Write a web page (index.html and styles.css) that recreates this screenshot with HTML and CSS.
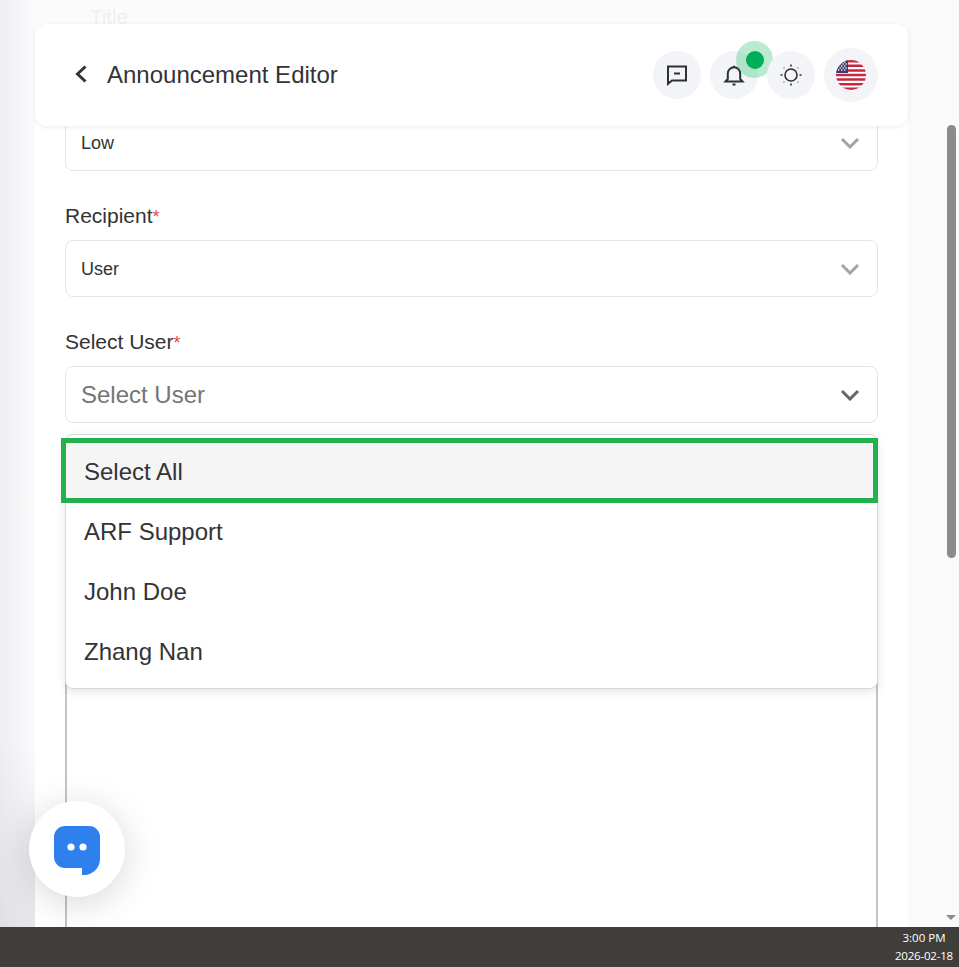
FILE: index.html
```html
<!DOCTYPE html>
<html lang="en">
<head>
<meta charset="utf-8">
<title>Announcement Editor</title>
<link rel="stylesheet" href="styles.css">
</head>
<body>
<div class="screen">
  <div class="viewport">
    <div class="gutter-left"></div>
    <main class="content">
      <form class="form">
        <div class="title-line">Title</div>
        <div class="select select-low">
          <span class="value">Low</span>
          <svg class="chevron muted" viewBox="0 0 20 12"><path d="M2 2l8 8 8-8"/></svg>
        </div>
        <div class="field">
          <label class="label">Recipient<span class="req">*</span></label>
          <div class="select">
            <span class="value">User</span>
            <svg class="chevron muted" viewBox="0 0 20 12"><path d="M2 2l8 8 8-8"/></svg>
          </div>
        </div>
        <div class="field">
          <label class="label">Select User<span class="req">*</span></label>
          <div class="select">
            <span class="placeholder">Select User</span>
            <svg class="chevron" viewBox="0 0 20 12"><path d="M2 2l8 8 8-8"/></svg>
          </div>
        </div>
        <div class="editor-box"></div>
      </form>
    </main>
    <div class="gutter-right">
      <div class="scroll-thumb"></div>
      <div class="scroll-down"></div>
    </div>

    <div class="top-fade"></div>

    <header class="appbar">
      <div class="appbar-title">
        <svg class="back" viewBox="0 0 14 18"><path d="M11.500 1.500L3.500 9l8 7.500"/></svg>
        <h1>Announcement Editor</h1>
      </div>
      <div class="actions">
        <button class="round" type="button" aria-label="Messages">
          <svg width="24" height="24" viewBox="0 0 24 24" class="ico"><path d="M3 3.500h18v14H7l-4 3.300z"/><path d="M9 10.500h6"/></svg>
        </button>
        <button class="round" type="button" aria-label="Notifications">
          <svg width="24" height="24" viewBox="0 0 24 24" class="ico"><path d="M3.500 18.500h17l-2.300-2.500v-5.500a6.200 6.200 0 0 0-12.400 0V16z"/><path d="M12 2.700v1.600"/><path d="M10.500 21.500h3"/></svg>
          <span class="pulse"><span class="pulse-dot"></span></span>
        </button>
        <button class="round" type="button" aria-label="Theme">
          <svg width="24" height="24" viewBox="0 0 24 24" class="ico sun"><circle cx="12" cy="12" r="6"/><path d="M12 1.500v2M12 20.500v2M1.500 12h2M20.500 12h2"/><path class="faint" d="M4.500 4.500l1 1M18.500 18.500l1 1M4.500 19.500l1-1M18.500 5.500l1-1"/></svg>
        </button>
        <button class="round round-lg" type="button" aria-label="Language">
          <svg width="30" height="30" viewBox="0 0 30 30">
            <defs><clipPath id="flagclip"><circle cx="15" cy="15" r="15"/></clipPath></defs>
            <g clip-path="url(#flagclip)">
              <rect width="30" height="30" fill="#fff"/>
              <path d="M0 1.200h30M0 5.800h30M0 10.400h30M0 15h30M0 19.600h30M0 24.200h30M0 28.800h30" stroke="#c8273f" stroke-width="2.500"/>
              <rect width="12" height="13" fill="#3c3b6e"/>
              <path d="M2 2h1.400M5 2h1.400M8 2h1.400M3.500 4h1.400M6.500 4h1.400M9.500 4h1.400M2 6h1.400M5 6h1.400M8 6h1.400M3.500 8h1.400M6.500 8h1.400M9.500 8h1.400M2 10h1.400M5 10h1.400M8 10h1.400" stroke="#e8e8f2" stroke-width="1.400"/>
            </g>
          </svg>
        </button>
      </div>
    </header>

    <div class="dropdown">
      <div class="option option-active">Select All</div>
      <div class="option">ARF Support</div>
      <div class="option">John Doe</div>
      <div class="option">Zhang Nan</div>
      <div class="highlight"></div>
    </div>

    <button class="fab" type="button" aria-label="Chat">
      <svg width="46" height="49" viewBox="0 0 46 49">
        <path d="M11 0h24a11 11 0 0 1 11 11v22a16 16 0 0 1-16 16h-2V42H11A11 11 0 0 1 0 31V11A11 11 0 0 1 11 0z" fill="#2f80ed"/>
        <circle cx="17" cy="21" r="3.600" fill="#fff"/>
        <circle cx="29" cy="21" r="3.600" fill="#fff"/>
      </svg>
    </button>
  </div>
  <footer class="taskbar">
    <div class="clock">
      <div>3:00 PM</div>
      <div class="clock-date">2026-02-18</div>
    </div>
  </footer>
</div>
</body>
</html>
```
FILE: styles.css
```css
* { box-sizing: border-box; }
html, body { margin: 0; padding: 0; height: 100%; overflow: hidden; }
body { font-family: "Liberation Sans", Arial, sans-serif; color: #333; background: #fff; }
h1 { margin: 0; font-weight: 400; font-size: 24px; color: #333338; }

.screen { display: flex; flex-direction: column; height: 967px; }
.viewport { position: relative; display: flex; height: 927px; overflow: hidden; }

.gutter-left {
  width: 35px; flex: none;
  background:
    linear-gradient(180deg, rgba(200,200,208,0) 80%, rgba(200,200,208,.4) 100%),
    linear-gradient(90deg, #eeeef3 0%, #fbfbfc 100%);
}
.content { flex: 1; background: #fff; overflow: hidden; }
.gutter-right { position: relative; width: 51px; flex: none; background: #fafafa; }
.scroll-thumb {
  position: absolute; top: 125px; left: 39px; width: 9px; height: 433px;
  background: #8b8b8b; border-radius: 5px;
}
.scroll-down {
  position: absolute; top: 915px; left: 38px; width: 0; height: 0;
  border-left: 5px solid transparent; border-right: 5px solid transparent;
  border-top: 5px solid #8b8b8b;
}

.form { padding: 0 30px; }
.title-line {
  height: 34px; padding: 5px 0 0 24px; border-left: 1px solid #f2f2f2;
  font-size: 20.500px; line-height: 24px; color: #cfcfcf;
}
.select {
  display: flex; align-items: center; justify-content: space-between;
  height: 57px; padding: 0 17px 0 15px;
  background: #fff; border: 1px solid #e1e6ec; border-radius: 8px;
  font-size: 18px; color: #333;
}
.select-low { margin-top: 80px; }
.value { padding-top: 2px; }
.chevron { width: 20px; height: 12px; fill: none; stroke: #666; stroke-width: 3; }
.chevron.muted { stroke: #a3a3a3; }
.placeholder { font-size: 24px; color: #757575; }
.field { margin-top: 32px; }
.label { display: block; height: 37px; font-size: 21px; line-height: 26px; color: #333; }
.req { color: #e5484d; font-size: 18px; }
.editor-box { margin-top: 120px; height: 600px; border: 2px solid #c4c4c4; }

.top-fade {
  position: absolute; top: 0; left: 35px; width: 873px; height: 30px;
  background: rgba(250,250,250,.75);
}

.appbar {
  position: absolute; top: 24px; left: 35px; width: 873px; height: 102px;
  display: flex; align-items: center; justify-content: space-between;
  padding: 0 30px 0 39px;
  background: #fff; border-radius: 12px;
  box-shadow: 0 1px 4px rgba(0,0,0,.08);
}
.appbar-title { display: flex; align-items: center; gap: 19px; }
.back { width: 14px; height: 18px; margin-top: -3px; fill: none; stroke: #333338; stroke-width: 3; }
.actions { display: flex; align-items: center; gap: 9px; }
.round {
  position: relative; display: flex; align-items: center; justify-content: center;
  width: 48px; height: 48px; padding: 0;
  border: 0; border-radius: 50%; background: #f3f4f8;
}
.round-lg { width: 54px; height: 54px; }
.ico { fill: none; stroke: #2f2f36; stroke-width: 2; }
.sun { stroke-width: 1.600; }
.sun .faint { stroke: #9a9aa2; }
.pulse {
  position: absolute; top: -10px; left: 26px; width: 37px; height: 37px;
  display: flex; align-items: center; justify-content: center;
  border-radius: 50%; background: rgba(0,176,80,.27);
}
.pulse-dot { width: 18px; height: 18px; border-radius: 50%; background: #00ae57; }

.dropdown {
  position: absolute; top: 434px; left: 65px; width: 813px; height: 255px;
  padding: 7px 0 8px;
  background: #fff; border: 1px solid #d8d8d8; border-radius: 8px;
  box-shadow: 0 3px 10px rgba(0,0,0,.10);
}
.option {
  display: flex; align-items: center; height: 60px; padding-left: 18px;
  font-size: 24px; color: #333338;
}
.option-active { background: #f5f5f5; }
.highlight {
  position: absolute; top: 3px; left: -5px; width: 817px; height: 65px;
  border: 5px solid #22b14c;
}

.fab {
  position: absolute; top: 801px; left: 29px; width: 96px; height: 96px;
  display: flex; align-items: center; justify-content: center; padding: 2px 0 0;
  border: 0; border-radius: 50%; background: #fff;
  box-shadow: 0 6px 36px rgba(0,0,0,.16);
}

.taskbar {
  display: flex; justify-content: flex-end; align-items: center;
  height: 40px; padding-right: 6px;
  background: #403e3b; color: #fff;
  font-family: "Open Sans", "Liberation Sans", sans-serif; font-size: 11.500px;
}
.clock { text-align: center; line-height: 18px; }
.clock-date { letter-spacing: -.2px; }
```
